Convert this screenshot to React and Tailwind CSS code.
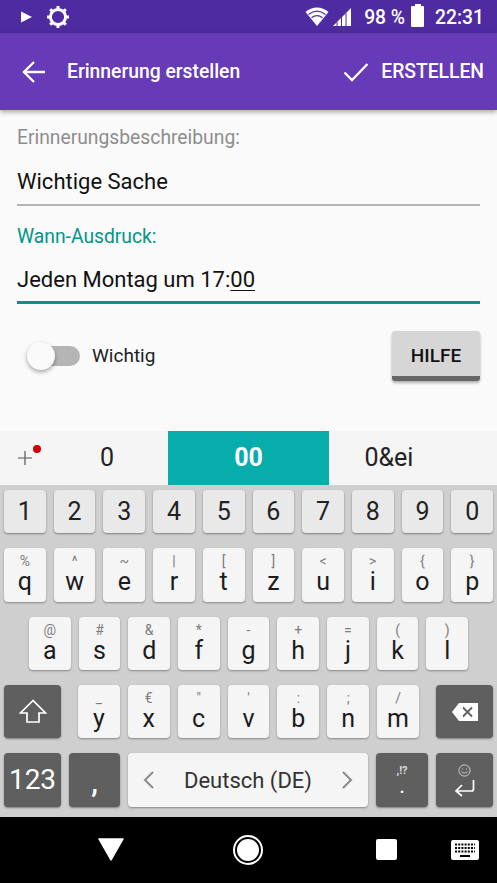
import React from "react";

const numbers = ["1", "2", "3", "4", "5", "6", "7", "8", "9", "0"];
const rowTwo = [
  ["q", "%"], ["w", "^"], ["e", "~"], ["r", "|"], ["t", "["],
  ["z", "]"], ["u", "<"], ["i", ">"], ["o", "{"], ["p", "}"],
];
const rowThree = [
  ["a", "@"], ["s", "#"], ["d", "&"], ["f", "*"], ["g", "-"],
  ["h", "+"], ["j", "="], ["k", "("], ["l", ")"],
];
const rowFour = [
  ["y", "_"], ["x", "€"], ["c", '"'], ["v", "'"], ["b", ":"], ["n", ";"], ["m", "/"],
];

const LetterKey = ({ letter, hint }) => (
  <div className="flex flex-1 flex-col items-center rounded-[4px] bg-[#f5f5f5] shadow-[0_1px_2px_rgba(0,0,0,0.35)]">
    <span className="mt-[5px] h-[17px] text-[14px] leading-[17px] text-[#7d7d7d]">{hint}</span>
    <span className="text-[25px] leading-[24px] text-[#1c1c1c]">{letter}</span>
  </div>
);

const DarkKey = ({ className, children }) => (
  <div className={`${className} flex items-center justify-center rounded-[4px] bg-[#5f5f5f] text-white shadow-[0_1px_2px_rgba(0,0,0,0.4)]`}>
    {children}
  </div>
);

const StatusBar = () => (
  <div className="flex h-[33px] items-center bg-[#4f2ba1] pl-[20px] pr-[13px] text-white">
    <svg width="13" height="14" viewBox="0 0 13 14">
      <path d="M1 1.5 L12 7 L1 12.5 Z" fill="#fff" />
    </svg>
    <svg width="24" height="24" viewBox="0 0 24 24" className="ml-[13px]">
      <circle cx="12" cy="12" r="7.6" fill="none" stroke="#fff" strokeWidth="3" />
      <g stroke="#fff" strokeWidth="3">
        <path d="M12 1v3M12 20v3M1 12h3M20 12h3M4.2 4.2l2.2 2.2M17.6 17.6l2.2 2.2M4.2 19.8l2.2-2.2M17.6 6.4l2.2-2.2" />
      </g>
    </svg>
    <svg width="24" height="20" viewBox="0 0 24 20" className="ml-auto">
      <path d="M0.5 5 C7 -1 17 -1 23.5 5 L12 19 Z" fill="#fff" />
      <path d="M3.5 7.5 C9 3 15 3 20.5 7.5 M6.5 10.8 C10 8 14 8 17.5 10.8" fill="none" stroke="#4f2ba1" strokeWidth="1.2" />
    </svg>
    <svg width="20" height="20" viewBox="0 0 20 20" className="ml-[3px]">
      <path d="M1 19 L19 1 V19 Z" fill="#fff" />
      <path d="M5 15v4M9.5 10v9M14 6v13" stroke="#4f2ba1" strokeWidth="1" />
    </svg>
    <span className="ml-[12px] pt-[2px] text-[19.3px] font-medium leading-none">98 %</span>
    <div className="relative ml-[6px] h-[21px] w-[13px] rounded-[1px] bg-white">
      <div className="absolute left-[3.5px] top-[-2px] h-[2px] w-[6px] bg-white" />
    </div>
    <span className="ml-[11px] pt-[2px] text-[19.3px] font-medium leading-none">22:31</span>
  </div>
);

const AppBar = () => (
  <div className="relative flex h-[77px] items-center bg-[#673ab7] pl-[22px] pr-[13px] text-white shadow-[0_2px_5px_rgba(0,0,0,0.35)]">
    <svg width="24" height="22" viewBox="0 0 24 22" fill="none" stroke="#fff" strokeWidth="2.4">
      <path d="M23 11H2M12 1 2 11l10 10" />
    </svg>
    <span className="ml-[21px] pt-[2px] text-[19.3px] font-medium">Erinnerung erstellen</span>
    <svg width="26" height="20" viewBox="0 0 26 20" fill="none" stroke="#fff" strokeWidth="2.3" className="ml-auto">
      <path d="M1.5 10.5 9 18 24.5 2" />
    </svg>
    <span className="ml-[12px] pt-[2px] text-[19.3px] font-medium">ERSTELLEN</span>
  </div>
);

const Form = () => (
  <div className="flex h-[321px] flex-col bg-[#fafafa] px-[17px]">
    <label className="mt-[17px] text-[19.3px] leading-[22px] text-[#8d8d8d]">Erinnerungsbeschreibung:</label>
    <div className="mt-[20px] h-[37px] border-b-2 border-[#b4b4b4] text-[22px] leading-[26px] text-[#111]">Wichtige Sache</div>
    <label className="mt-[20px] text-[19.3px] leading-[22px] text-[#009688]">Wann-Ausdruck:</label>
    <div className="mt-[19px] h-[37px] border-b-[3px] border-[#009688] text-[22px] leading-[26px] text-[#111]">
      Jeden Montag um 17:<span className="underline decoration-1 underline-offset-[3px]">00</span>
    </div>
    <div className="mt-[27px] flex items-start justify-between">
      <div className="ml-[10px] mt-[11px] flex items-center">
        <div className="relative h-[20px] w-[53px]">
          <div className="absolute right-0 top-0 h-[20px] w-[40px] rounded-full bg-[#b5b5b5]" />
          <div className="absolute left-0 top-[-4px] h-[28px] w-[28px] rounded-full bg-[#fafafa] shadow-[0_2px_4px_rgba(0,0,0,0.35)]" />
        </div>
        <span className="ml-[12px] text-[19px] text-[#222]">Wichtig</span>
      </div>
      <div className="flex h-[50px] w-[88px] flex-col overflow-hidden rounded-[3px] bg-[#d6d6d6] shadow-[0_2px_3px_rgba(0,0,0,0.3)]">
        <div className="flex flex-1 items-center justify-center pt-[5px] text-[19px] font-medium text-[#111]">HILFE</div>
        <div className="h-[5px] bg-[#666]" />
      </div>
    </div>
  </div>
);

const Suggestions = () => (
  <div className="flex h-[54px] bg-[#f5f5f5] text-[25px] text-[#222]">
    <div className="relative flex w-[168px] items-center">
      <svg width="16" height="16" viewBox="0 0 16 16" className="ml-[17px]" stroke="#555" strokeWidth="1.2">
        <path d="M8 1v14M1 8h14" />
      </svg>
      <div className="absolute left-[33px] top-[14px] h-[8px] w-[8px] rounded-full bg-[#d50000]" />
      <span className="absolute left-[100px]">0</span>
    </div>
    <div className="flex w-[161px] items-center justify-center bg-[#07adab] font-bold text-white">00</div>
    <div className="flex flex-1 items-center justify-center pr-[48px]">0&amp;ei</div>
  </div>
);

const Keyboard = () => (
  <div className="flex h-[332px] flex-col gap-[15px] bg-[#cfcfcf] px-[4px] pt-[5px]">
    <div className="flex h-[43px] gap-[8px]">
      {numbers.map((n) => (
        <div key={n} className="flex flex-1 items-center justify-center rounded-[4px] bg-[#e9e9e9] pt-[1px] text-[25px] text-[#222] shadow-[0_1px_2px_rgba(0,0,0,0.4)]">
          {n}
        </div>
      ))}
    </div>
    <div className="flex h-[54px] gap-[8px]">
      {rowTwo.map(([l, h]) => <LetterKey key={l} letter={l} hint={h} />)}
    </div>
    <div className="flex h-[53px] gap-[8px] px-[25px]">
      {rowThree.map(([l, h]) => <LetterKey key={l} letter={l} hint={h} />)}
    </div>
    <div className="flex h-[53px]">
      <DarkKey className="w-[57px]">
        <svg width="28" height="25" viewBox="0 0 28 25" fill="none" stroke="#fff" strokeWidth="1.7">
          <path d="M14 1.5 1.5 14H8v9h12v-9h6.5Z" />
        </svg>
      </DarkKey>
      <div className="mx-[17px] flex flex-1 gap-[8px]">
        {rowFour.map(([l, h]) => <LetterKey key={l} letter={l} hint={h} />)}
      </div>
      <DarkKey className="w-[57px]">
        <svg width="26" height="18" viewBox="0 0 26 18">
          <path d="M7 0H26V18H7L0 9Z" fill="#fff" />
          <path d="M11 4.5 20 13.5M20 4.5 11 13.5" stroke="#5f5f5f" strokeWidth="1.8" />
        </svg>
      </DarkKey>
    </div>
    <div className="flex h-[54px] gap-[8px]">
      <DarkKey className="w-[57px] text-[28px]">123</DarkKey>
      <DarkKey className="w-[51px] pt-[3px] text-[30px] font-medium">,</DarkKey>
      <div className="flex flex-1 items-center justify-between rounded-[4px] bg-[#f5f5f5] px-[15px] text-[22px] text-[#333] shadow-[0_1px_2px_rgba(0,0,0,0.35)]">
        <svg width="11" height="18" viewBox="0 0 11 18" fill="none" stroke="#8a8a8a" strokeWidth="2"><path d="M10 1 2 9l8 8" /></svg>
        <span>Deutsch (DE)</span>
        <svg width="11" height="18" viewBox="0 0 11 18" fill="none" stroke="#8a8a8a" strokeWidth="2"><path d="M1 1l8 8-8 8" /></svg>
      </div>
      <DarkKey className="w-[52px] flex-col">
        <span className="text-[11px] font-bold leading-[12px] text-[#ddd]">,!?</span>
        <span className="mt-[4px] text-[16px] font-bold leading-[14px]">.</span>
      </DarkKey>
      <DarkKey className="w-[57px] flex-col">
        <svg width="13" height="13" viewBox="0 0 13 13" fill="none" stroke="#ddd" strokeWidth="0.9">
          <circle cx="6.5" cy="6.5" r="5.6" />
          <path d="M3.5 7.5c1.5 2 4.5 2 6 0M4.5 4.5v1M8.5 4.5v1" />
        </svg>
        <svg width="21" height="17" viewBox="0 0 21 17" fill="none" stroke="#fff" strokeWidth="1.7" className="mt-[3px]">
          <path d="M19.5 0v9a2 2 0 0 1-2 2H2M8 5 2 11l6 5" />
        </svg>
      </DarkKey>
    </div>
  </div>
);

const NavBar = () => (
  <div className="relative flex h-[66px] items-center bg-black">
    <svg width="26" height="23" viewBox="0 0 26 23" className="absolute left-[98px] top-[21px]">
      <path d="M1 1H25L13 22Z" fill="#fff" stroke="#fff" strokeWidth="1.5" strokeLinejoin="round" />
    </svg>
    <div className="absolute left-[233px] top-[18px] flex h-[30px] w-[30px] items-center justify-center rounded-full border-2 border-white">
      <div className="h-[22px] w-[22px] rounded-full bg-white" />
    </div>
    <div className="absolute left-[376px] top-[22px] h-[21px] w-[21px] rounded-[2px] bg-white" />
    <svg width="28" height="20" viewBox="0 0 28 20" className="absolute left-[451px] top-[23px]">
      <rect width="28" height="20" rx="2" fill="#fff" />
      <path d="M4 4.5h20M4 8h20M4 11.5h20" stroke="#000" strokeWidth="1.8" strokeDasharray="2 1.2" />
      <path d="M9 16h10" stroke="#000" strokeWidth="2" />
    </svg>
  </div>
);

export default function App() {
  return (
    <div className="flex h-[883px] w-[497px] flex-col overflow-hidden font-['Roboto',sans-serif]">
      <StatusBar />
      <AppBar />
      <Form />
      <Suggestions />
      <Keyboard />
      <NavBar />
    </div>
  );
}
